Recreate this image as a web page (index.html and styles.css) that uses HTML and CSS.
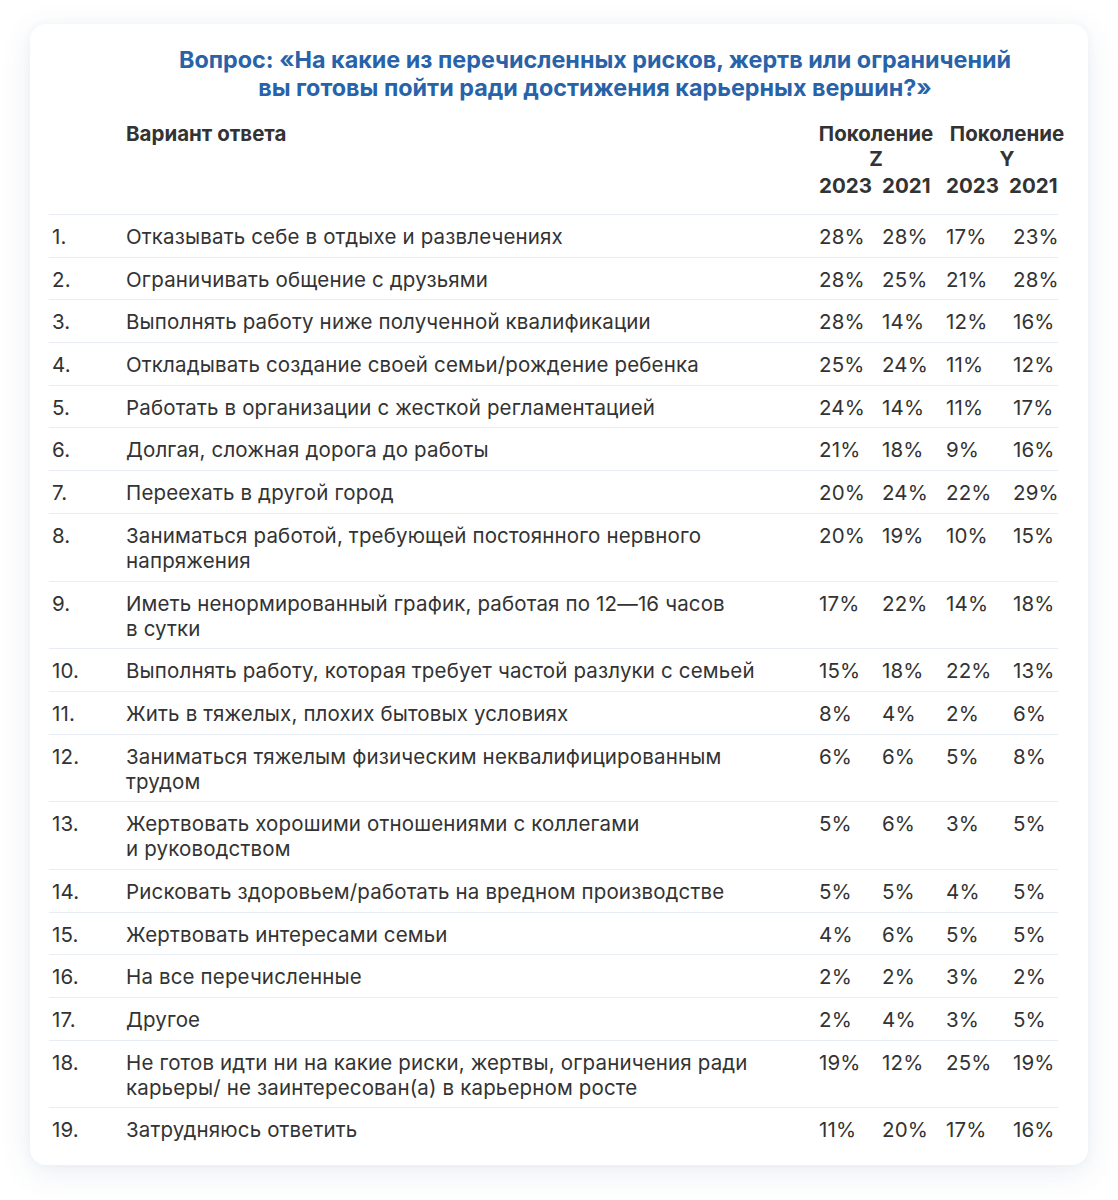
FILE: index.html
```html
<!DOCTYPE html>
<html lang="ru">
<head>
<meta charset="utf-8">
<link rel="stylesheet" href="styles.css">
</head>
<body>
<div class="page">
  <div class="card">
    <h1 class="title">Вопрос: «На какие из перечисленных рисков, жертв или ограничений<br>вы готовы пойти ради достижения карьерных вершин?»</h1>
    <div class="table">
      <div class="row head">
        <div class="num"></div>
        <div class="ans">Вариант ответа</div>
        <div class="gen">
          <div class="gname">Поколение Z</div>
          <div class="years"><span>2023</span><span>2021</span></div>
        </div>
        <div class="gen gen-y">
          <div class="gname">Поколение Y</div>
          <div class="years"><span>2023</span><span>2021</span></div>
        </div>
      </div>
      <div class="row"><div class="num">1.</div><div class="ans">Отказывать себе в отдыхе и развлечениях</div><div class="v">28%</div><div class="v">28%</div><div class="v">17%</div><div class="v">23%</div></div>
      <div class="row"><div class="num">2.</div><div class="ans">Ограничивать общение с друзьями</div><div class="v">28%</div><div class="v">25%</div><div class="v">21%</div><div class="v">28%</div></div>
      <div class="row"><div class="num">3.</div><div class="ans">Выполнять работу ниже полученной квалификации</div><div class="v">28%</div><div class="v">14%</div><div class="v">12%</div><div class="v">16%</div></div>
      <div class="row"><div class="num">4.</div><div class="ans">Откладывать создание своей семьи/рождение ребенка</div><div class="v">25%</div><div class="v">24%</div><div class="v">11%</div><div class="v">12%</div></div>
      <div class="row"><div class="num">5.</div><div class="ans">Работать в организации с жесткой регламентацией</div><div class="v">24%</div><div class="v">14%</div><div class="v">11%</div><div class="v">17%</div></div>
      <div class="row"><div class="num">6.</div><div class="ans">Долгая, сложная дорога до работы</div><div class="v">21%</div><div class="v">18%</div><div class="v">9%</div><div class="v">16%</div></div>
      <div class="row"><div class="num">7.</div><div class="ans">Переехать в другой город</div><div class="v">20%</div><div class="v">24%</div><div class="v">22%</div><div class="v">29%</div></div>
      <div class="row"><div class="num">8.</div><div class="ans">Заниматься работой, требующей постоянного нервного<br>напряжения</div><div class="v">20%</div><div class="v">19%</div><div class="v">10%</div><div class="v">15%</div></div>
      <div class="row"><div class="num">9.</div><div class="ans">Иметь ненормированный график, работая по 12—16 часов<br>в сутки</div><div class="v">17%</div><div class="v">22%</div><div class="v">14%</div><div class="v">18%</div></div>
      <div class="row"><div class="num">10.</div><div class="ans">Выполнять работу, которая требует частой разлуки с семьей</div><div class="v">15%</div><div class="v">18%</div><div class="v">22%</div><div class="v">13%</div></div>
      <div class="row"><div class="num">11.</div><div class="ans">Жить в тяжелых, плохих бытовых условиях</div><div class="v">8%</div><div class="v">4%</div><div class="v">2%</div><div class="v">6%</div></div>
      <div class="row"><div class="num">12.</div><div class="ans">Заниматься тяжелым физическим неквалифицированным<br>трудом</div><div class="v">6%</div><div class="v">6%</div><div class="v">5%</div><div class="v">8%</div></div>
      <div class="row"><div class="num">13.</div><div class="ans">Жертвовать хорошими отношениями с коллегами<br>и руководством</div><div class="v">5%</div><div class="v">6%</div><div class="v">3%</div><div class="v">5%</div></div>
      <div class="row"><div class="num">14.</div><div class="ans">Рисковать здоровьем/работать на вредном производстве</div><div class="v">5%</div><div class="v">5%</div><div class="v">4%</div><div class="v">5%</div></div>
      <div class="row"><div class="num">15.</div><div class="ans">Жертвовать интересами семьи</div><div class="v">4%</div><div class="v">6%</div><div class="v">5%</div><div class="v">5%</div></div>
      <div class="row"><div class="num">16.</div><div class="ans">На все перечисленные</div><div class="v">2%</div><div class="v">2%</div><div class="v">3%</div><div class="v">2%</div></div>
      <div class="row"><div class="num">17.</div><div class="ans">Другое</div><div class="v">2%</div><div class="v">4%</div><div class="v">3%</div><div class="v">5%</div></div>
      <div class="row"><div class="num">18.</div><div class="ans">Не готов идти ни на какие риски, жертвы, ограничения ради<br>карьеры/ не заинтересован(а) в карьерном росте</div><div class="v">19%</div><div class="v">12%</div><div class="v">25%</div><div class="v">19%</div></div>
      <div class="row last"><div class="num">19.</div><div class="ans">Затрудняюсь ответить</div><div class="v">11%</div><div class="v">20%</div><div class="v">17%</div><div class="v">16%</div></div>
    </div>
  </div>
</div>
</body>
</html>
```

FILE: styles.css
```css
* { box-sizing: border-box; }
html, body { margin: 0; padding: 0; background: #ffffff; }
body {
  font-family: Inter, "Noto Sans", "Liberation Sans", sans-serif;
  color: #333333;
}
.page {
  padding: 24px 30px 36px 30px;
}
.card {
  background: #ffffff;
  border-radius: 16px;
  box-shadow: 0 8px 32px rgba(60, 90, 140, 0.10), 0 0 8px rgba(60, 90, 140, 0.05);
  padding: 22px 30px 15px 19px;
}
.title {
  margin: 0 0 19px 0;
  padding-left: 83px;
  text-align: center;
  color: #2862a8;
  font-size: 23.35px;
  line-height: 28px;
  font-weight: 700;
}
.table {
  display: flex;
  flex-direction: column;
}
.row {
  display: grid;
  grid-template-columns: 74px 693px 63px 64px 64px 1fr;
  font-size: 20.5px;
  line-height: 25px;
  letter-spacing: 0.15px;
  padding: 9px 0 7.7px 3px;
  border-bottom: 1px solid #e8edf3;
}
.row .v:last-child { padding-left: 3px; }
.row.last { border-bottom: none; }
.row.head {
  grid-template-columns: 74px 693px 127px 1fr;
  font-weight: 700;
  letter-spacing: 0;
  padding: 0 0 16px 3px;
}
.gen {
  display: flex;
  flex-direction: column;
}
.gname {
  width: 116px;
  text-align: center;
  margin-left: -1px;
}
.gen-y .gname { margin-left: 3px; }
.years {
  display: flex;
  margin-top: 2px;
}
.years span { width: 63px; }
.v { white-space: nowrap; }
```
